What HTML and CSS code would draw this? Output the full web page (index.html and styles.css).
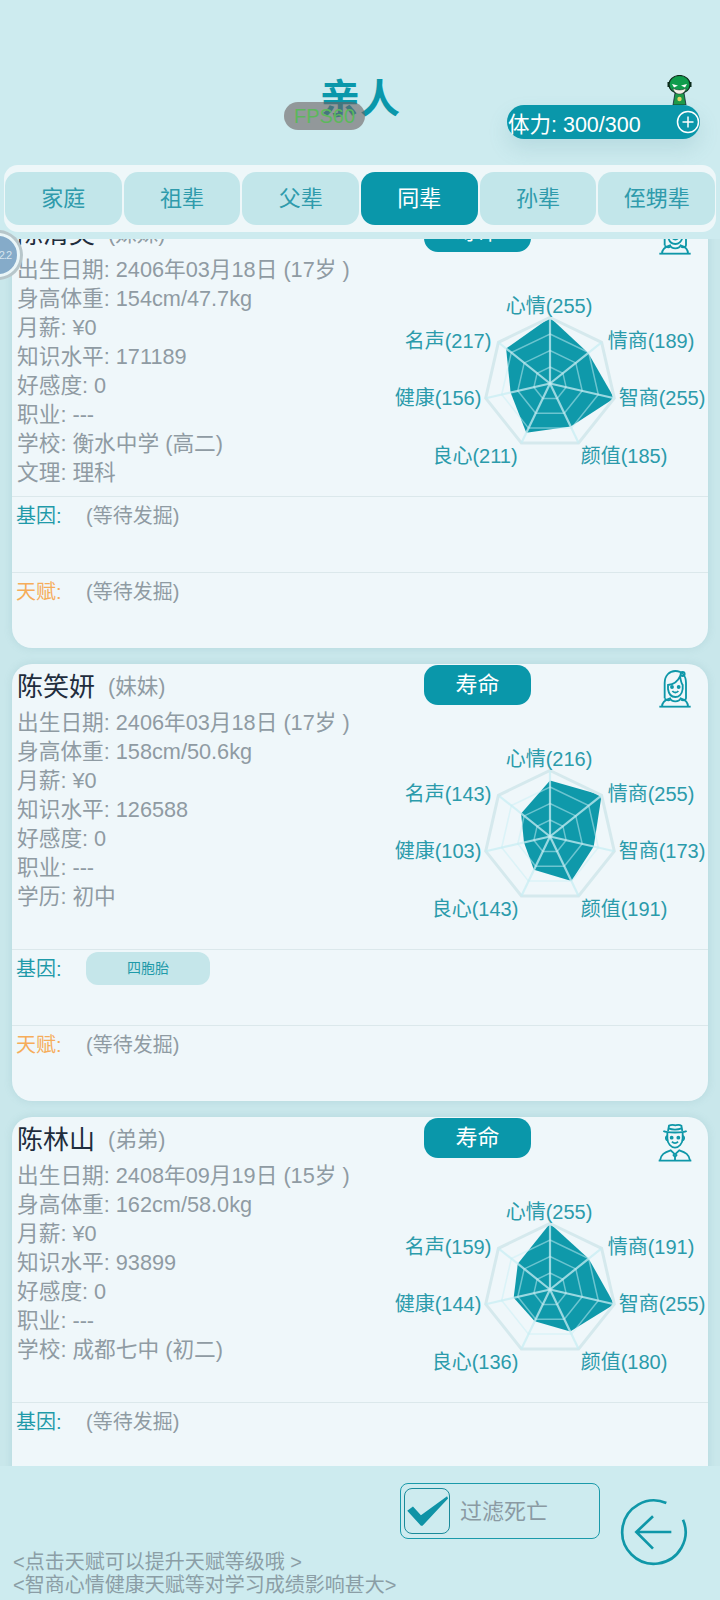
FILE: index.html
```html
<!DOCTYPE html>
<html lang="zh-CN">
<head>
    <meta charset="UTF-8">
    <meta name="viewport" content="width=device-width, initial-scale=1.0">
    <title>亲人</title>
    <link rel="stylesheet" href="styles.css">
</head>
<body>
    <svg class="defs" width="0" height="0">
        <symbol id="girl" viewBox="0 0 150 150">
            <path d="M44 100V54C44 32 58 18 76 18C96 18 108 32 108 54V100C108 106 98 107 93 104"/>
            <path d="M44 100C47 106 56 107 61 104"/>
            <path d="M54 60C70 58 84 48 90 34C92 44 94 56 98 60V72C96 88 86 96 76 96C64 96 56 86 54 72Z"/>
            <circle cx="98" cy="27" r="6"/>
            <path d="M67 78C72 84 80 84 85 78"/>
            <path d="M36 125C36 110 46 104 60 100C64 112 88 112 92 100C106 104 114 110 114 125"/>
            <path class="thick" d="M28 125H122"/>
            <circle class="dot" cx="66" cy="66" r="3"/>
            <circle class="dot" cx="86" cy="66" r="3"/>
        </symbol>
        <symbol id="man" viewBox="0 9 150 150">
            <path d="M40 48C50 54 100 54 110 48"/>
            <path d="M54 48L57 32C66 28 70 30 76 31C82 30 88 28 94 32L97 48"/>
            <path d="M55 40C66 44 84 44 95 40"/>
            <path d="M52 54V70C52 86 64 98 75 98C86 98 98 86 98 70V54"/>
            <path d="M52 64C46 62 46 76 53 76M98 64C104 62 104 76 97 76"/>
            <path d="M66 80C71 86 79 86 84 80"/>
            <path d="M30 137C32 118 44 112 62 106L75 118L88 106C106 112 118 118 120 137"/>
            <path d="M69 118L75 126L81 118M75 126V137"/>
            <path class="thick" d="M26 137H124"/>
            <circle class="dot" cx="65" cy="68" r="3"/>
            <circle class="dot" cx="85" cy="68" r="3"/>
        </symbol>
    </svg>

    <div class="float-ball"><span>2.2</span></div>
    <div class="fps">FPS60</div>

    <header class="top">
        <div></div>
        <h1 class="title">亲人</h1>
        <div class="stamina-box">
            <svg class="hero" viewBox="0 0 25 30">
                <path d="M8 18H17L19 30H6Z" fill="#1f9a48" stroke="#123" stroke-width=".8"/>
                <circle cx="12.5" cy="24" r="2.2" fill="#e4d46a"/>
                <path d="M1.500 7V12M23.500 7V12" stroke="#0d2b1c" stroke-width="2"/>
                <ellipse cx="12.500" cy="9.500" rx="10.500" ry="9" fill="#0f9c4c" stroke="#0d2b1c" stroke-width="1.200"/>
                <path d="M6 13C7 21 18 21 19 13C16 15.500 9 15.500 6 13Z" fill="#f4efe6" stroke="#0d2b1c" stroke-width=".5"/>
                <path d="M5 9L11 10.500L7 12.500ZM20 9L14 10.500L18 12.500Z" fill="#fff"/>
            </svg>
            <div class="stamina">
                <span>体力: 300/300</span>
                <svg class="plus" viewBox="0 0 24 24">
                    <circle cx="12" cy="12" r="10.500"/>
                    <path d="M12 6.500V17.500M6.500 12H17.500"/>
                </svg>
            </div>
        </div>
    </header>

    <nav class="tabs">
        <div class="tab">家庭</div>
        <div class="tab">祖辈</div>
        <div class="tab">父辈</div>
        <div class="tab active">同辈</div>
        <div class="tab">孙辈</div>
        <div class="tab">侄甥辈</div>
    </nav>

    <main class="list" id="list">
        <section class="card">
            <div class="card-top">
                <div class="info">
                    <div class="name-row"><span class="name">陈清美</span><span class="relation">(妹妹)</span></div>
                    <p>出生日期: 2406年03月18日 (17岁 )</p>
                    <p>身高体重: 154cm/47.7kg</p>
                    <p>月薪: ¥0</p>
                    <p>知识水平: 171189</p>
                    <p>好感度: 0</p>
                    <p>职业: ---</p>
                    <p>学校: 衡水中学 (高二)</p>
                    <p>文理: 理科</p>
                </div>
                <div class="side">
                    <div class="side-head">
                        <div class="life-btn">寿命</div>
                        <svg class="avatar"><use href="#girl"/></svg>
                    </div>
                    <svg class="radar" data-values="255,189,255,185,211,156,217"></svg>
                </div>
            </div>
            <div class="trait-row"><span class="trait-label">基因:</span><span class="pending">(等待发掘)</span></div>
            <div class="trait-row"><span class="trait-label talent">天赋:</span><span class="pending">(等待发掘)</span></div>
        </section>

        <section class="card">
            <div class="card-top">
                <div class="info">
                    <div class="name-row"><span class="name">陈笑妍</span><span class="relation">(妹妹)</span></div>
                    <p>出生日期: 2406年03月18日 (17岁 )</p>
                    <p>身高体重: 158cm/50.6kg</p>
                    <p>月薪: ¥0</p>
                    <p>知识水平: 126588</p>
                    <p>好感度: 0</p>
                    <p>职业: ---</p>
                    <p>学历: 初中</p>
                </div>
                <div class="side">
                    <div class="side-head">
                        <div class="life-btn">寿命</div>
                        <svg class="avatar"><use href="#girl"/></svg>
                    </div>
                    <svg class="radar" data-values="216,255,173,191,143,103,143"></svg>
                </div>
            </div>
            <div class="trait-row"><span class="trait-label">基因:</span><span class="chip">四胞胎</span></div>
            <div class="trait-row"><span class="trait-label talent">天赋:</span><span class="pending">(等待发掘)</span></div>
        </section>

        <section class="card">
            <div class="card-top">
                <div class="info">
                    <div class="name-row"><span class="name">陈林山</span><span class="relation">(弟弟)</span></div>
                    <p>出生日期: 2408年09月19日 (15岁 )</p>
                    <p>身高体重: 162cm/58.0kg</p>
                    <p>月薪: ¥0</p>
                    <p>知识水平: 93899</p>
                    <p>好感度: 0</p>
                    <p>职业: ---</p>
                    <p>学校: 成都七中 (初二)</p>
                </div>
                <div class="side">
                    <div class="side-head">
                        <div class="life-btn">寿命</div>
                        <svg class="avatar"><use href="#man"/></svg>
                    </div>
                    <svg class="radar" data-values="255,191,255,180,136,144,159"></svg>
                </div>
            </div>
            <div class="trait-row"><span class="trait-label">基因:</span><span class="pending">(等待发掘)</span></div>
            <div class="trait-row"><span class="trait-label talent">天赋:</span><span class="pending">(等待发掘)</span></div>
        </section>
    </main>

    <footer class="bottom">
        <div class="tips">
            <div>&lt;点击天赋可以提升天赋等级哦 &gt;</div>
            <div>&lt;智商心情健康天赋等对学习成绩影响甚大&gt;</div>
        </div>
        <div class="filter">
            <div class="checkbox">
                <svg viewBox="40 40 138 138"><polygon points="47,108 65,95 90,122 172,63 175,70 95,155 90,155"/></svg>
            </div>
            <span>过滤死亡</span>
        </div>
        <svg class="back" viewBox="685 67 210 210">
            <path d="M830 85A95 95 0 1 0 880 135"/>
            <path d="M845 172H740M790 125L740 172L790 222"/>
        </svg>
    </footer>

    <script src="script.js"></script>
</body>
</html>
```

FILE: styles.css
```css
* {
    box-sizing: border-box;
}

body {
    font-family: 'Liberation Sans', 'Noto Sans CJK SC', sans-serif;
    background: #cdebef;
    margin: 0;
    padding: 0;
    width: 720px;
    height: 1600px;
    display: flex;
    flex-direction: column;
    position: relative;
    overflow: hidden;
}

.defs {
    position: absolute;
}

/* Header */
.top {
    height: 165px;
    flex-shrink: 0;
    padding-top: 75px;
    display: grid;
    grid-template-columns: 1fr 80px 1fr;
}

.title {
    margin: 0;
    padding-top: 3px;
    font-size: 40px;
    line-height: 42px;
    font-weight: bold;
    color: #0a97aa;
    text-align: center;
    white-space: nowrap;
}

.stamina-box {
    display: flex;
    flex-direction: column;
    align-items: flex-end;
    padding-right: 20px;
}

.hero {
    width: 25px;
    height: 30px;
    margin-right: 8px;
}

.stamina {
    width: 193px;
    height: 34px;
    padding: 0 0 0 1px;
    border-radius: 17px;
    background: #0a97aa;
    color: #fff;
    font-size: 21.5px;
    display: flex;
    align-items: center;
    justify-content: space-between;
    box-shadow: 0 10px 20px rgba(90, 150, 160, 0.18);
}

.plus {
    width: 24px;
    height: 24px;
    fill: none;
    stroke: #fff;
    stroke-width: 1.5;
}

.fps {
    position: absolute;
    left: 284px;
    top: 102px;
    width: 81px;
    height: 28px;
    border-radius: 14px;
    background: rgba(107, 97, 96, 0.6);
    color: #5cb85c;
    font-size: 20px;
    line-height: 28px;
    text-align: center;
}

.float-ball {
    position: absolute;
    left: -24px;
    top: 233px;
    width: 44px;
    height: 44px;
    border-radius: 50%;
    background: #85abc9;
    border: 3px solid #eaf6f8;
    box-shadow: 0 0 0 3px #b7c6ca;
    color: #d5e4ee;
    font-size: 11px;
    letter-spacing: -1px;
    line-height: 38px;
    text-align: right;
    padding-right: 6px;
    z-index: 5;
}

/* Tabs */
.tabs {
    height: 67px;
    flex-shrink: 0;
    margin: 0 4px;
    padding: 7px 1px;
    background: #eef7f9;
    border-radius: 14px;
    display: flex;
    gap: 2px;
}

.tab {
    flex: 1;
    padding-bottom: 5px;
    border-radius: 14px;
    background: #c2e6ea;
    color: #2f9bac;
    font-size: 22px;
    display: flex;
    align-items: center;
    justify-content: center;
}

.tab.active {
    background: #0a97aa;
    color: #fff;
}

/* Member list */
.list {
    flex: 1;
    min-height: 0;
    margin-top: 7px;
    padding: 0 12px;
    display: flex;
    flex-direction: column;
    gap: 16px;
    overflow: hidden;
    background: #c9e7eb;
}

.card {
    height: 437px;
    flex-shrink: 0;
    background: #eff7fa;
    border-radius: 20px;
    box-shadow: 0 0 8px rgba(90, 150, 160, 0.18);
}

.card-top {
    height: 285px;
    display: flex;
}

.info {
    flex: 1;
    padding-left: 5px;
    color: #8f9ba3;
    font-size: 21.7px;
    white-space: nowrap;
}

.info p {
    margin: 0;
    height: 29px;
    line-height: 29px;
}

.name-row {
    height: 44px;
    padding-bottom: 3px;
    display: flex;
    align-items: center;
    gap: 13px;
}

.name {
    color: #1f2d3d;
    font-size: 26px;
}

.relation {
    font-size: 21.500px;
}

.side {
    width: 328px;
    flex-shrink: 0;
}

.side-head {
    height: 41px;
    padding: 1px 8px 0 44px;
    display: flex;
    justify-content: space-between;
}

.life-btn {
    width: 107px;
    height: 40px;
    border-radius: 14px;
    background: #0a97aa;
    color: #fff;
    font-size: 22px;
    line-height: 40px;
    text-align: center;
}

.avatar {
    width: 50px;
    height: 50px;
    flex-shrink: 0;
    fill: none;
    stroke: #0e97a8;
    stroke-width: 5.5;
}

.avatar .thick {
    stroke-width: 7;
}

.avatar .dot {
    fill: #0e97a8;
    stroke: none;
}

.radar {
    display: block;
    width: 328px;
    height: 244px;
}

.radar text {
    fill: #2b9bab;
    font-size: 20px;
    text-anchor: middle;
    dominant-baseline: central;
}

.radar .value {
    fill: #0f99aa;
}

.radar .ring {
    fill: none;
    stroke: rgba(200, 240, 245, 0.5);
    stroke-width: 1.5;
}

.radar .ring.outer {
    stroke: #d5e9ed;
    stroke-width: 3;
}

.radar .spoke {
    stroke: rgba(200, 238, 243, 0.75);
    stroke-width: 2.2;
}

.trait-row {
    height: 76px;
    padding-left: 4px;
    border-top: 1px solid #dbe8eb;
    display: flex;
    align-items: flex-start;
    font-size: 20px;
    line-height: 38px;
}

.trait-label {
    width: 70px;
    color: #1f9aa9;
}

.trait-label.talent {
    color: #f6ad5a;
}

.pending {
    color: #8f9ba3;
}

.chip {
    width: 124px;
    height: 33px;
    margin-top: 2px;
    border-radius: 12px;
    background: #c5e6ea;
    color: #1f9aa9;
    font-size: 14px;
    line-height: 33px;
    text-align: center;
}

/* Bottom bar */
.bottom {
    height: 134px;
    flex-shrink: 0;
    padding-left: 13px;
    display: flex;
}

.tips {
    width: 387px;
    flex-shrink: 0;
    align-self: flex-end;
    margin-bottom: 3px;
    color: #8b9ea6;
    font-size: 20px;
    line-height: 23px;
    white-space: nowrap;
}

.filter {
    width: 200px;
    height: 56px;
    margin-top: 17px;
    padding: 4px 3px;
    border: 1px solid #1a9aaa;
    border-radius: 8px;
    display: flex;
    align-items: center;
    gap: 10px;
    color: #8a9aa3;
    font-size: 22px;
}

.filter span {
    padding-bottom: 5px;
}

.checkbox {
    width: 46px;
    height: 46px;
    border: 1px solid #1a8a9a;
    border-radius: 8px;
}

.checkbox svg {
    display: block;
    width: 44px;
    height: 44px;
    fill: #0f93a6;
}

.back {
    width: 70px;
    height: 70px;
    flex-shrink: 0;
    margin: 31px 0 0 18px;
    fill: none;
    stroke: #0f97a8;
    stroke-width: 8;
}
```

FILE: script.js
```js
// Radar charts, order is clockwise from the top
const labels = ['心情', '情商', '智商', '颜值', '良心', '健康', '名声'];
const labelPos = [[-1, -78], [101, -43], [112, 14], [74, 72], [-75, 72], [-112, 14], [-102, -43]];
const R = 66;

function point(i, r) {
    const a = i * 2 * Math.PI / 7;
    return [r * Math.sin(a), -r * Math.cos(a)];
}

function polygon(rs) {
    return rs.map((r, i) => point(i, r).map(n => n.toFixed(1)).join(',')).join(' ');
}

document.querySelectorAll('.radar').forEach(svg => {
    const values = svg.dataset.values.split(',').map(Number);
    let html = `<polygon class="value" points="${polygon(values.map(v => v / 255 * R))}"/>`;

    [1, 0.75, 0.5, 0.25].forEach(k => {
        html += `<polygon class="ring${k === 1 ? ' outer' : ''}" points="${polygon(values.map(() => k * R))}"/>`;
    });

    values.forEach((v, i) => {
        const [x, y] = point(i, R);
        html += `<line class="spoke" x1="0" y1="0" x2="${x.toFixed(1)}" y2="${y.toFixed(1)}"/>`;
        html += `<text x="${labelPos[i][0]}" y="${labelPos[i][1]}">${labels[i]}(${v})</text>`;
    });

    svg.setAttribute('viewBox', '-170 -131.5 328 244');
    svg.innerHTML = html;
});

// The list opens a little scrolled
document.getElementById('list').scrollTop = 28;
```
